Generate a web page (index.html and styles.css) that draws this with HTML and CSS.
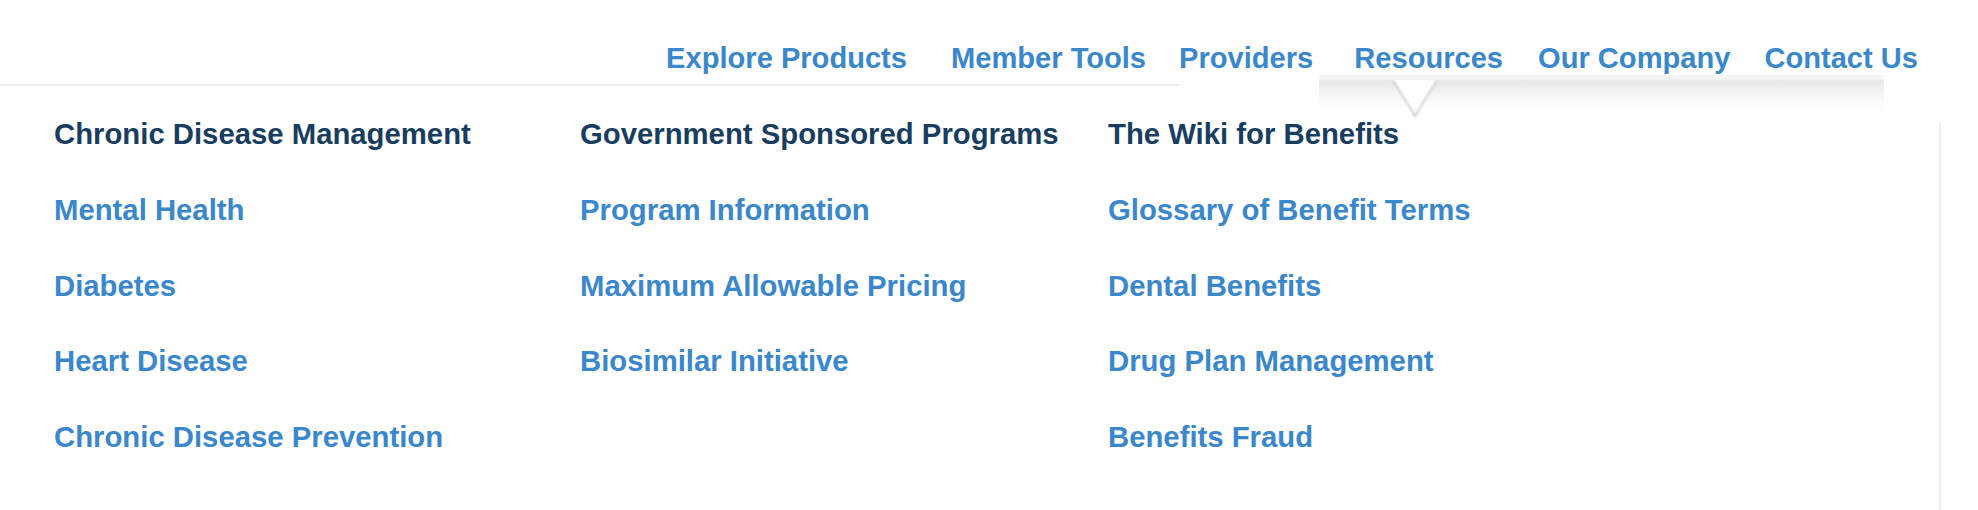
FILE: index.html
```html
<!DOCTYPE html>
<html lang="en">
<head>
<meta charset="utf-8">
<title>Resources menu</title>
<link rel="stylesheet" href="styles.css">
</head>
<body>
<header class="header">
  <nav class="nav">
    <a class="nav-link" href="#">Explore Products</a>
    <a class="nav-link gap-44" href="#">Member Tools</a>
    <a class="nav-link gap-33" href="#">Providers</a>
    <a class="nav-link gap-41 is-active" href="#">Resources</a>
    <a class="nav-link gap-35" href="#">Our Company</a>
    <a class="nav-link gap-34" href="#">Contact Us</a>
  </nav>
  <div class="dropdown-shadow">
    <svg class="notch" width="48" height="40" viewBox="0 0 48 40">
      <defs>
        <filter id="soft" x="-20%" y="-20%" width="140%" height="140%">
          <feGaussianBlur stdDeviation="0.8"/>
        </filter>
      </defs>
      <polygon points="2,0 46,0 24,36" fill="#ffffff"/>
      <polyline points="2,0 24,36 46,0" fill="none" stroke="#cfcfcf" stroke-width="1.8" filter="url(#soft)"/>
    </svg>
  </div>
</header>
<div class="header-line"></div>
<section class="mega">
  <div class="cols">
    <ul class="col">
      <li class="col-title">Chronic Disease Management</li>
      <li><a href="#">Mental Health</a></li>
      <li><a href="#">Diabetes</a></li>
      <li><a href="#">Heart Disease</a></li>
      <li><a href="#">Chronic Disease Prevention</a></li>
    </ul>
    <ul class="col">
      <li class="col-title">Government Sponsored Programs</li>
      <li><a href="#">Program Information</a></li>
      <li><a href="#">Maximum Allowable Pricing</a></li>
      <li><a href="#">Biosimilar Initiative</a></li>
    </ul>
    <ul class="col">
      <li class="col-title">The Wiki for Benefits</li>
      <li><a href="#">Glossary of Benefit Terms</a></li>
      <li><a href="#">Dental Benefits</a></li>
      <li><a href="#">Drug Plan Management</a></li>
      <li><a href="#">Benefits Fraud</a></li>
    </ul>
  </div>
  <div class="edge"></div>
</section>
</body>
</html>
```

FILE: styles.css
```css
* { box-sizing: border-box; }

html, body {
  margin: 0;
  padding: 0;
  background: #ffffff;
}

body {
  font-family: "Liberation Sans", Arial, Helvetica, sans-serif;
  font-weight: bold;
  font-size: 29.3px;
  line-height: 34px;
  width: 1978px;
  height: 510px;
  overflow: hidden;
}

a { text-decoration: none; color: #3b87cb; }

.header {
  position: relative;
  height: 84px;
  padding-top: 41px;
  padding-right: 60px;
}

.nav {
  display: flex;
  justify-content: flex-end;
  font-size: 29.1px;
}

.nav-link {
  position: relative;
  z-index: 2;
  white-space: nowrap;
}

.gap-44 { margin-left: 44px; }
.gap-33 { margin-left: 33px; }
.gap-41 { margin-left: 41px; }
.gap-35 { margin-left: 35px; }
.gap-34 { margin-left: 34px; }

.dropdown-shadow {
  position: absolute;
  left: 1319px;
  top: 75px;
  width: 565px;
  height: 36px;
  z-index: 1;
  background: linear-gradient(#f5f5f5 0, #f5f5f5 4px, #e6e6e6 6px, #f1f1f1 16px, #fbfbfb 26px, rgba(255,255,255,0) 36px);
}

.notch {
  position: absolute;
  left: 72px;
  top: 5px;
  display: block;
}

.header-line {
  width: 1179px;
  height: 2px;
  background: #ededed;
}

.mega {
  display: flex;
  height: 424px;
}

.cols {
  display: grid;
  grid-template-columns: 526px 528px 527px;
  padding-left: 54px;
  padding-top: 31px;
}

.col {
  list-style: none;
  margin: 0;
  padding: 0;
  display: flex;
  flex-direction: column;
  gap: 41.8px;
}

.col li { white-space: nowrap; }

.col-title {
  color: #193d5f;
}

.edge {
  margin-left: auto;
  margin-right: 37px;
  margin-top: 37px;
  width: 2px;
  background: #efefef;
}
```
